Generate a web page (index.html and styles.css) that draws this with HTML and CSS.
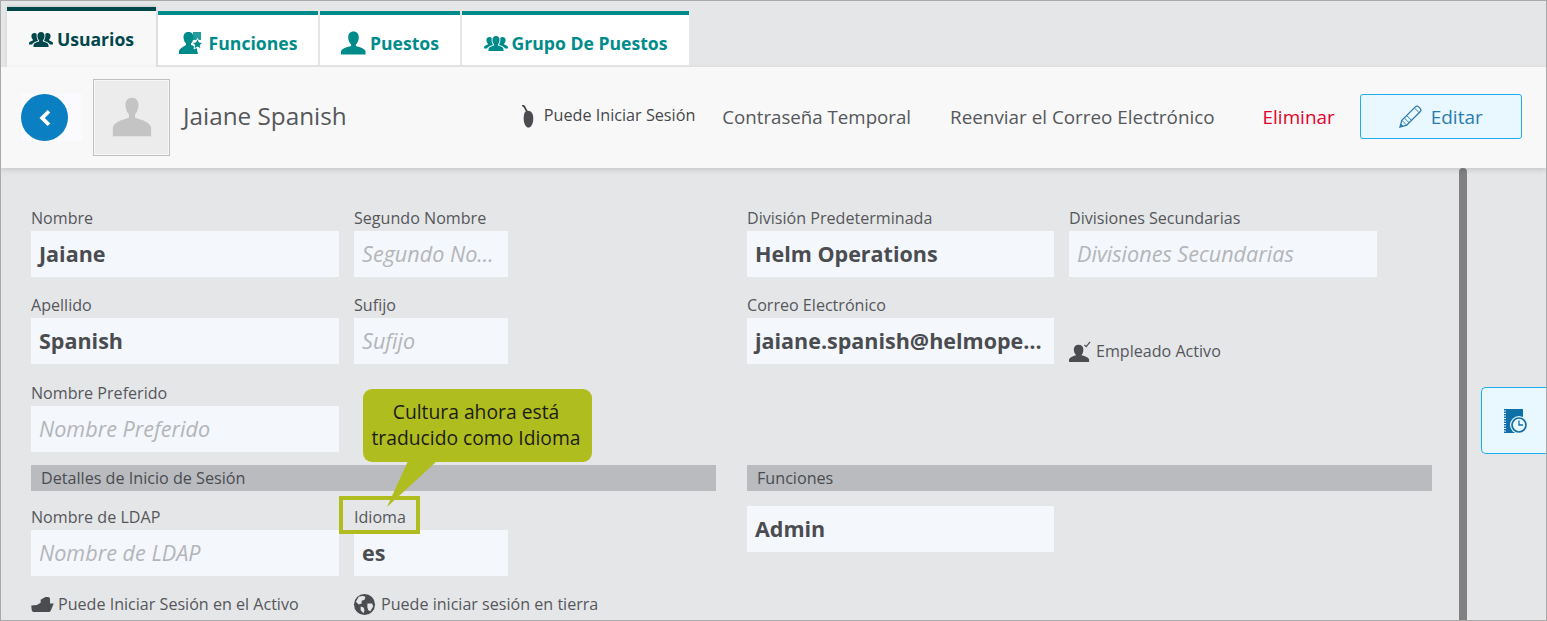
FILE: index.html
```html
<!DOCTYPE html>
<html lang="es">
<head>
<meta charset="utf-8">
<title>Usuarios</title>
<link rel="stylesheet" href="styles.css">
</head>
<body>
<div class="frame">
  <nav class="tabs">
    <a class="tab active">
      <svg class="ic-users" viewBox="0 0 24 16"><use href="#users"/></svg>Usuarios
    </a>
    <a class="tab t2">
      <svg class="ic-roles" viewBox="0 0 24 22"><path d="M14 0h8v8h-8Z" fill="currentColor" opacity=".85"/><path d="M4.500 5C4.500 2 6.500 0 9.500 0s5 2 5 5c0 2.500-1 5-2.500 6.500V13c2 .8 4 1.300 5.500 2.500L19 22H0v-3c.8-3 5-4.300 7-6v-1.500C5.500 10 4.500 7.500 4.500 5Z" fill="currentColor"/><path d="M18.500 6.500l1.700 3.600 3.800.4-2.800 2.600.8 3.900-3.500-2-3.500 2 .8-3.900-2.800-2.600 3.800-.4Z" fill="currentColor" stroke="#fff" stroke-width="1"/></svg>Funciones
    </a>
    <a class="tab t3">
      <svg class="ic-person" viewBox="0 0 26 24"><path d="M13 0c3.500 0 5.500 2.500 5.500 6 0 3-1.300 6-3 7.500V15c3 1.200 9 2 10 5.500V24H0v-3.500C1 17 7 16.200 10.500 15v-1.500c-1.700-1.500-3-4.500-3-7.500 0-3.500 2-6 5.500-6Z" fill="currentColor"/></svg>Puestos
    </a>
    <a class="tab t4">
      <svg class="ic-users" viewBox="0 0 24 16"><use href="#users"/></svg>Grupo De Puestos
    </a>
  </nav>

  <header class="head">
    <div class="back-wrap">
      <button class="back" aria-label="Volver">
        <svg viewBox="1 0 10 16" width="12" height="18"><path d="M9.500 2 3.500 8l6 6" fill="none" stroke="#fff" stroke-width="3.400"/></svg>
      </button>
    </div>
    <div class="avatar">
      <svg viewBox="0 0 46 46" width="40" height="40"><path d="M23 1c5 0 7.500 3.500 7.500 8.500 0 4-1.800 8-4 10.500v4c4 2 16 3 18.500 11v10H1V35c2.500-8 14.500-9 18.500-11v-4c-2.200-2.500-4-6.500-4-10.500C15.500 4.500 18 1 23 1Z" fill="#c4c4c4"/></svg>
    </div>
    <h1 class="name">Jaiane Spanish</h1>
    <div class="actions">
      <span class="login">
        <svg viewBox="0 0 14 24" width="14" height="23"><path d="M1 0 3 1.500 6.500 8" stroke="#3f4145" stroke-width="1.800" fill="none"/><path d="M7 6c3.500 0 5.500 3 5.500 8s-2 9.500-5 9.500-5-4.500-5-9.500S3.500 6 7 6Z" fill="#4a4c50"/></svg>Puede Iniciar Sesión
      </span>
      <a class="act a1">Contraseña Temporal</a>
      <a class="act a2">Reenviar el Correo Electrónico</a>
      <a class="act del">Eliminar</a>
      <button class="edit">
        <svg viewBox="0 0 24 24" width="23" height="23"><path d="M1 23l2-7L17 2c1-1 2.500-1 3.500 0l1.500 1.500c1 1 1 2.500 0 3.500L8 21Z" fill="none" stroke="#2b7cb0" stroke-width="1.300"/><path d="M3 16l5 5M5.500 13.500l5 5M8 11l5 5M16 3l5 5" stroke="#2b7cb0" stroke-width="1"/><path d="M1 23l1-3.500 2.500 2.500Z" fill="#2b7cb0"/></svg>Editar
      </button>
    </div>
  </header>

  <main class="body">
    <div class="form">
      <section class="col">
        <div class="row r1">
          <div class="field w308"><label>Nombre</label><div class="val">Jaiane</div></div>
          <div class="field w154"><label>Segundo Nombre</label><div class="val ph">Segundo Nombre</div></div>
        </div>
        <div class="row r2">
          <div class="field w308"><label>Apellido</label><div class="val">Spanish</div></div>
          <div class="field w154"><label>Sufijo</label><div class="val ph">Sufijo</div></div>
        </div>
        <div class="row r3">
          <div class="field w308"><label>Nombre Preferido</label><div class="val ph">Nombre Preferido</div></div>
        </div>
        <div class="bar">Detalles de Inicio de Sesión</div>
        <div class="row r4">
          <div class="field w308"><label>Nombre de LDAP</label><div class="val ph">Nombre de LDAP</div></div>
          <div class="field w154"><label>Idioma</label><div class="val">es</div></div>
        </div>
        <div class="row checks">
          <span class="check w308">
            <svg viewBox="0 0 24 16" width="23" height="15"><path d="M10 6V3l5-3h3c1 0 2 1 2 2v5h4l-3 7c-.500 1-1 2-3 2H3c-1.500 0-2-1-2.500-2L0 9l6-.5Z" fill="#4a4c50"/></svg>Puede Iniciar Sesión en el Activo
          </span>
          <span class="check globe">
            <svg viewBox="0 0 24 24" width="23" height="23"><circle cx="12" cy="12" r="11" fill="#4a4c50"/><path d="M6 4c3-1 5-1 7 0l-1 3-3 1v3l-3 1-3-3ZM15 11l5 0 1 3-3 5-2-1-1-3ZM8 14l3 1 1 3-1 3-3-3Z" fill="#e5e6e8"/></svg>Puede iniciar sesión en tierra
          </span>
        </div>
      </section>

      <section class="col">
        <div class="row r1">
          <div class="field w307"><label>División Predeterminada</label><div class="val">Helm Operations</div></div>
          <div class="field w308"><label>Divisiones Secundarias</label><div class="val ph">Divisiones Secundarias</div></div>
        </div>
        <div class="row r2">
          <div class="field w307"><label>Correo Electrónico</label><div class="val">jaiane.spanish@helmoperations.com</div></div>
          <span class="emp">
            <svg viewBox="0 0 24 22" width="23" height="21"><path d="M10 4c3 0 5 2 5 5s-1 4.500-2 6c3 .7 7 2 8 4v3H0v-3c1-2 5-3.300 7.500-4C6 13.500 5 11.500 5 9c0-3 2-5 5-5Z" fill="#4a4c50"/><path d="M16 4l2 2 4-5" fill="none" stroke="#4a4c50" stroke-width="1.200"/></svg>Empleado Activo
          </span>
        </div>
        <div class="spacer"></div>
        <div class="bar">Funciones</div>
        <div class="role val">Admin</div>
      </section>
    </div>
    <div class="scroll"></div>
    <button class="history" aria-label="Historial">
      <svg viewBox="0 0 24 26" width="24" height="26"><path d="M1 1h19v24H1Z" fill="#0f70a8"/><path d="M0 3h3M0 5.500h3M0 8h3M0 10.500h3M0 13h3M0 15.500h3M0 18h3M0 20.500h3M0 23h3" stroke="#e9f7ff" stroke-width="1"/><circle cx="16" cy="17" r="9" fill="#e9f7ff"/><circle cx="16" cy="17" r="7" fill="none" stroke="#0f70a8" stroke-width="1.700"/><path d="M16 12.500V17h4" fill="none" stroke="#0f70a8" stroke-width="1.300"/></svg>
    </button>
  </main>

  <div class="mark"></div>
  <div class="callout">Cultura ahora está<br>traducido como Idioma</div>
  <svg class="tail" viewBox="0 0 52 48" width="52" height="48"><path d="M22 0H51L1 46Z" fill="#b0bd1f"/></svg>
</div>

<svg class="defs" width="0" height="0">
  <symbol id="users" viewBox="0 0 24 16">
    <path d="M12 1c2.300 0 3.600 1.700 3.600 4 0 1.800-.8 3.400-1.700 4.300v1.200c2.500.7 5.100 1.300 5.600 3.500V16H4.500v-2c.5-2.200 3.100-2.800 5.600-3.500V9.300C9.200 8.400 8.400 6.800 8.400 5c0-2.300 1.300-4 3.600-4Z" fill="currentColor"/>
    <path d="M5.500 2c1 0 1.700.4 2.200 1-.4 2.400.1 4.700 1.200 6.400v.5C6.500 10.600 4 11.500 3 13.500H0V12c.4-1.500 2.200-2 3.800-2.500v-1C3 7.700 2.400 6.400 2.400 5 2.400 3.300 3.700 2 5.500 2ZM18.500 2c-1 0-1.700.4-2.200 1 .4 2.400-.1 4.700-1.200 6.400v.5c2.400.7 4.900 1.600 5.900 3.600h3V12c-.4-1.500-2.200-2-3.800-2.500v-1c.8-.8 1.400-2.100 1.400-3.500 0-1.700-1.300-3-3.100-3Z" fill="currentColor"/>
  </symbol>
</svg>
</body>
</html>
```

FILE: styles.css
```css
* { box-sizing: border-box; }
html, body { margin: 0; padding: 0; }
body { font-family: "Open Sans", "Noto Sans", sans-serif; color: #4a4c50; overflow: hidden; }
.defs { position: absolute; }
.frame {
  position: relative;
  width: 1547px;
  height: 621px;
  border: 1px solid #a9a9a9;
  background: #e5e6e8;
  overflow: hidden;
}

/* tabs */
.tabs { display: flex; align-items: flex-end; height: 66px; padding-left: 6px; gap: 2px; }
.tab {
  display: flex;
  align-items: center;
  justify-content: center;
  height: 54px;
  margin-bottom: 2px;
  padding-top: 6px;
  background: #fff;
  border-top: 4px solid #008b8b;
  color: #008b8b;
  font-size: 17.6px;
  font-weight: 700;
  white-space: nowrap;
}
.tab.active {
  width: 149px;
  height: 60px;
  margin-bottom: 0;
  padding-bottom: 6px;
  background: #f8f8f8;
  border-top-color: #00474c;
  color: #00474c;
  box-shadow: 0 -1px 3px rgba(0,0,0,.12);
}
.t2 { width: 160px; }
.t3 { width: 140px; }
.t4 { width: 227px; }
.ic-users { width: 24px; height: 16px; margin-right: 4px; }
.ic-roles { width: 24px; height: 22px; margin-right: 6px; }
.ic-person { width: 25px; height: 24px; margin-right: 4px; }

/* header */
.head {
  display: flex;
  align-items: center;
  height: 101px;
  padding-left: 20px;
  background: #f8f8f8;
  box-shadow: 0 2px 5px rgba(0,0,0,.14);
  position: relative;
}
.back-wrap { width: 61px; height: 47px; background: #fbfbff; }
.back {
  display: flex;
  align-items: center;
  justify-content: center;
  width: 47px;
  height: 47px;
  padding: 0;
  border: 0;
  border-radius: 50%;
  background: #0a7fc2;
}
.avatar {
  display: flex;
  align-items: center;
  justify-content: center;
  width: 77px;
  height: 77px;
  margin-left: 11px;
  margin-top: -1px;
  background: #ececec;
  border: 1px solid #c0c0c0;
  box-shadow: inset 0 0 0 1px #f8f8f8;
}
.name { margin: 0 0 4px 13px; font-size: 24.3px; font-weight: 400; color: #55575b; white-space: nowrap; }
.actions { display: flex; align-items: center; margin-left: 174px; margin-top: -2px; }
.login { display: flex; align-items: center; font-size: 16.2px; color: #45474b; white-space: nowrap; margin-top: -3px; }
.login svg { margin-right: 9px; margin-top: 3px; }
.act { font-size: 18.7px; color: #55575b; white-space: nowrap; }
.a1 { margin-left: 27px; }
.a2 { margin-left: 39px; font-size: 18.85px; }
.del { margin-left: 48px; color: #e4002b; font-size: 18.9px; }
.edit {
  display: flex;
  flex: none;
  align-items: center;
  justify-content: center;
  width: 162px;
  height: 45px;
  margin-left: 25px;
  padding: 0;
  background: #e9f7ff;
  border: 1px solid #1eaef0;
  border-radius: 3px;
  color: #2b7cb0;
  font: 400 19px "Open Sans", sans-serif;
}
.edit svg { margin-right: 9px; }

/* body */
.body { display: flex; align-items: flex-start; height: 452px; }
.form { display: flex; gap: 31px; width: 1458px; flex: none; padding: 40px 0 0 30px; }
.col { width: 685px; flex: none; }
.row { display: flex; gap: 15px; }
.r1 { height: 87px; }
.r2 { height: 88px; }
.r3 { height: 82px; }
.r4 { height: 85px; padding-top: 16px; }
.spacer { height: 82px; }
.field { display: flex; flex-direction: column; min-width: 0; }
.w307 { width: 307px; flex: none; }
.w308 { width: 308px; flex: none; }
.w154 { width: 154px; flex: none; }
label { flex: none; height: 23px; font-size: 16.1px; line-height: 20px; color: #55575b; white-space: nowrap; }
.val {
  flex: none;
  height: 46px;
  padding: 0 8px;
  background: #f4f7fc;
  font-size: 21.5px;
  font-weight: 700;
  line-height: 45px;
  color: #4a4c50;
  white-space: nowrap;
  overflow: hidden;
  text-overflow: ellipsis;
}
.ph { font-size: 21.6px; font-weight: 400; font-style: italic; color: #b3b5b9; }
.bar { height: 26px; padding-left: 10px; background: #b9bbbf; font-size: 16.15px; line-height: 26px; color: #4a4c50; }
.role { width: 307px; margin-top: 15px; }
.check, .emp { display: flex; align-items: center; font-size: 16.1px; color: #55575b; white-space: nowrap; }
.checks { height: 30px; margin-top: 13px; }
.check svg { margin-right: 4px; }
.globe svg { margin-left: -1px; margin-right: 5px; }
.emp { height: 66px; padding-top: 46px; }
.emp svg { margin-right: 4px; }
.scroll { flex: none; width: 8px; height: 452px; background: #808080; border-radius: 4px 4px 0 0; }
.history {
  display: flex;
  align-items: center;
  justify-content: center;
  flex: none;
  width: 66px;
  height: 67px;
  margin: 219px 0 0 14px;
  padding: 0;
  background: #e9f7ff;
  border: 1px solid #1eaef0;
  border-right: 0;
  border-radius: 5px 0 0 5px;
}

/* annotation */
.callout {
  position: absolute;
  left: 362px;
  top: 388px;
  width: 229px;
  height: 73px;
  padding: 10px 3px 0 0;
  background: #b0bd1f;
  border-radius: 9px;
  font-size: 19.3px;
  line-height: 26px;
  text-align: center;
  color: #1c1c14;
}
.tail { position: absolute; left: 385px; top: 460px; }
.mark { position: absolute; left: 338px; top: 495px; width: 81px; height: 38px; border: 4px solid #b0bd1f; }
```
